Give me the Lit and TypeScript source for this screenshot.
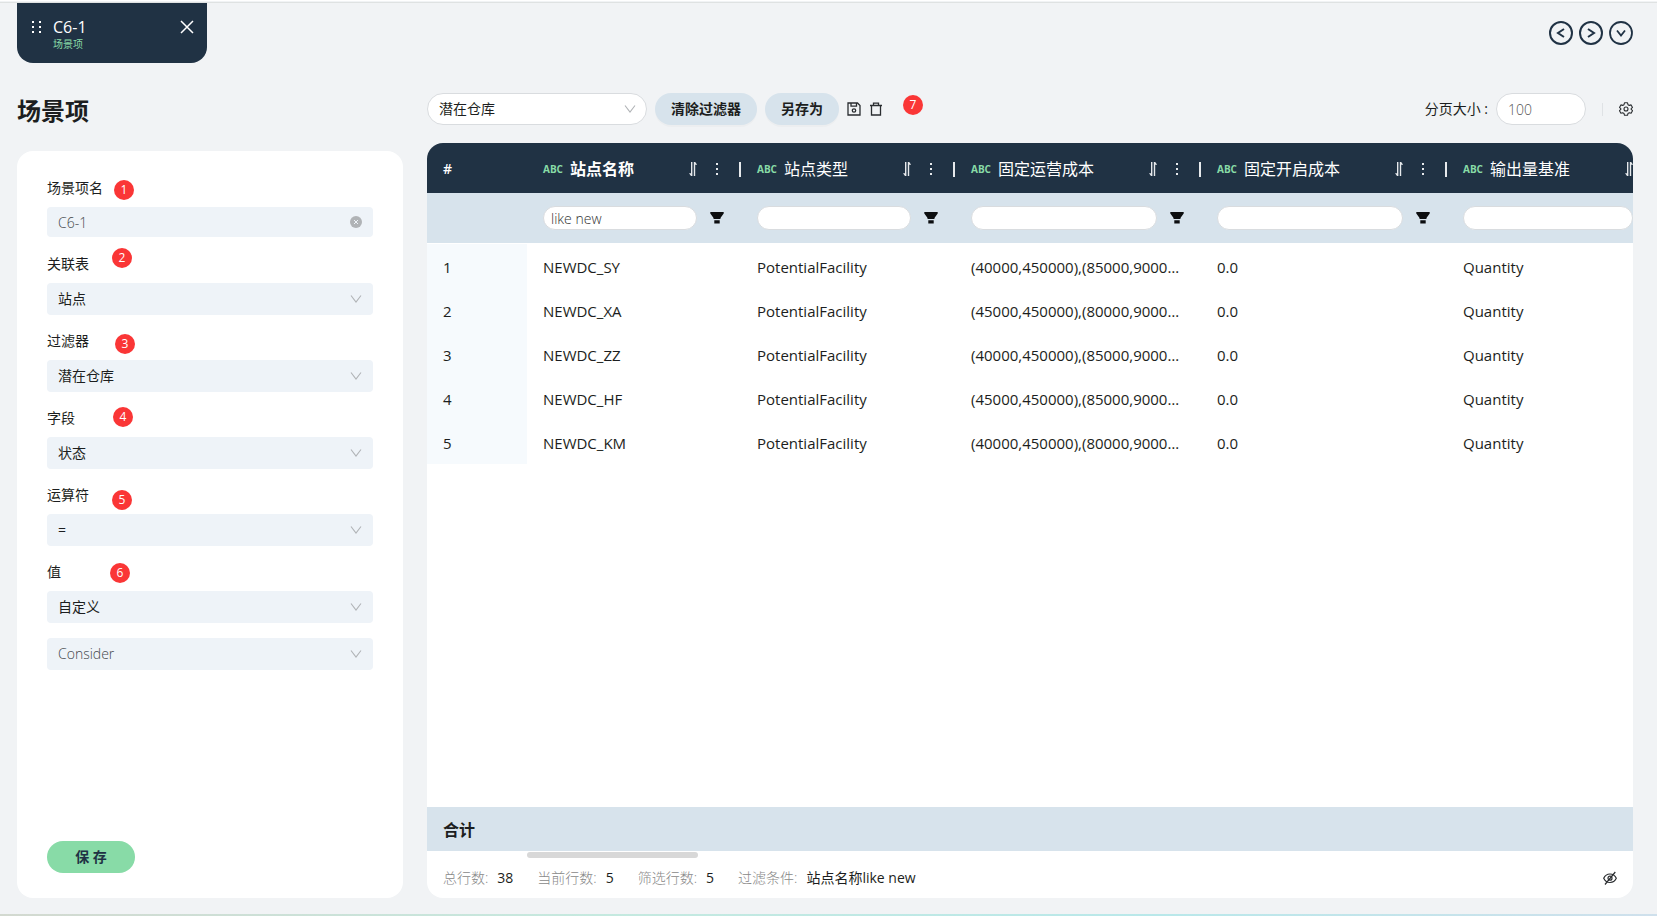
import { LitElement, html, css, svg, nothing } from "lit";
import { customElement, state } from "lit/decorators.js";
import { classMap } from "lit/directives/class-map.js";

interface Column {
  key: string;
  title: string;
  filter: string;
  width: string;
}

interface Field {
  id: string;
  label: string;
  value: string;
}

const COLUMNS: Column[] = [
  { key: "name", title: "站点名称", filter: "like new", width: "col-m" },
  { key: "type", title: "站点类型", filter: "", width: "col-m" },
  { key: "opCost", title: "固定运营成本", filter: "", width: "col-l" },
  { key: "openCost", title: "固定开启成本", filter: "", width: "col-l" },
  { key: "base", title: "输出量基准", filter: "", width: "col-s" },
];

const ROWS: Record<string, string>[] = [
  ["NEWDC_SY", "(40000,450000),(85000,900000)"],
  ["NEWDC_XA", "(45000,450000),(80000,900000)"],
  ["NEWDC_ZZ", "(40000,450000),(85000,900000)"],
  ["NEWDC_HF", "(45000,450000),(85000,900000)"],
  ["NEWDC_KM", "(40000,450000),(80000,900000)"],
].map(([name, opCost]) => ({
  name,
  type: "PotentialFacility",
  opCost,
  openCost: "0.0",
  base: "Quantity",
}));

const FIELDS: Field[] = [
  { id: "table", label: "关联表", value: "站点" },
  { id: "filter", label: "过滤器", value: "潜在仓库" },
  { id: "column", label: "字段", value: "状态" },
  { id: "operator", label: "运算符", value: "=" },
  { id: "value", label: "值", value: "自定义" },
];

const icons = {
  drag: svg`<svg width="10" height="13" viewBox="0 0 10 13" fill="currentColor"><path d="M0 0h2v2H0zM0 5h2v2H0zM0 10h2v2H0zM7 0h2v2H7zM7 5h2v2H7zM7 10h2v2H7z"/></svg>`,
  close: svg`<svg width="14" height="14" viewBox="0 0 14 14" fill="none" stroke="currentColor" stroke-width="1.500"><path d="M1 1l12 12M13 1L1 13"/></svg>`,
  left: svg`<svg width="24" height="24" viewBox="0 0 24 24" fill="none" stroke="currentColor" stroke-width="2"><circle cx="12" cy="12" r="11"/><path d="M15 8l-6 4 6 4"/></svg>`,
  right: svg`<svg width="24" height="24" viewBox="0 0 24 24" fill="none" stroke="currentColor" stroke-width="2"><circle cx="12" cy="12" r="11"/><path d="M9 8l6 4-6 4"/></svg>`,
  down: svg`<svg width="24" height="24" viewBox="0 0 24 24" fill="none" stroke="currentColor" stroke-width="1.800"><circle cx="12" cy="12" r="11"/><path d="M8 9.500l4 5 4-5"/></svg>`,
  chevron: svg`<svg class="chevron" width="12" height="12" viewBox="0 0 12 12" fill="none" stroke="currentColor" stroke-width="1.100"><path d="M1 2.500l5 6.500 5-6.500"/></svg>`,
  clear: svg`<svg width="12" height="12" viewBox="0 0 12 12"><circle cx="6" cy="6" r="6" fill="currentColor"/><path d="M4 4l4 4M8 4l-4 4" stroke="#eef3f8" stroke-width="1"/></svg>`,
  save: svg`<svg width="14" height="14" viewBox="0 0 14 14" fill="none" stroke="currentColor" stroke-width="1.300"><path d="M1 1h9.500L13 3.500V13H1z"/><path d="M4 1v3.200h5.500V1"/><circle cx="7" cy="8.500" r="1.700"/></svg>`,
  trash: svg`<svg width="14" height="14" viewBox="0 0 14 14" fill="none" stroke="currentColor" stroke-width="1.300"><path d="M1 3.500h12M4.500 3.300V1.200h5v2.100M2.500 3.500V13h9V3.500"/></svg>`,
  gear: svg`<svg width="14" height="14" viewBox="0 0 14 14" fill="none" stroke="currentColor" stroke-width="1.100" stroke-linejoin="round"><path d="M5.500.8h3l.5 1.900 1.300.7 1.800-.5 1.400 2.500-1.300 1.300v.7l1.300 1.300-1.400 2.500-1.800-.5-1.300.7-.5 1.900h-3L5 11.400l-1.300-.7-1.800.5L.5 8.700l1.300-1.300v-.7L.5 5.400l1.400-2.500 1.800.5L5 2.700z"/><circle cx="7" cy="7" r="2"/></svg>`,
  sort: svg`<svg width="8" height="14" viewBox="0 0 8 14" fill="currentColor"><path d="M2 0h1.400v14H2L0 11.200h2zM4.800 0h1.400L8.200 2.800h-2V14H4.800z"/></svg>`,
  more: svg`<svg width="2" height="12" viewBox="0 0 2 12" fill="currentColor"><path d="M0 0h2v2H0zM0 5h2v2H0zM0 10h2v2H0z"/></svg>`,
  funnel: svg`<svg width="14" height="12" viewBox="0 0 14 12" fill="currentColor"><path d="M.3 0h13.400v1.500L10.800 5.500 10.300 7H3.700L3.200 5.500.3 1.500zM4.300 8.200h5.400v3.300H4.300z"/></svg>`,
  eyeOff: svg`<svg width="14" height="14" viewBox="0 0 14 14" fill="none" stroke="currentColor" stroke-width="1.200"><path d="M.7 7.300C2 4.500 4.200 3 7 3s5 1.500 6.300 4.300C12 10 9.800 11.500 7 11.500S2 10 .7 7.300zM12.300 1L2 13.500"/><circle cx="7" cy="7.200" r="2"/></svg>`,
};

@customElement("app-root")
export class AppRoot extends LitElement {
  @state() private scenarioName = "C6-1";

  static styles = css`
    :host {
      --navy: #203244;
      --pale: #d7e3ec;
      --field: #eef3f8;
      --green: #88dba7;
      --ink: #1c1e20;
      --cjk: "Noto Sans CJK SC", sans-serif;
      display: flex;
      flex-direction: column;
      position: relative;
      box-sizing: border-box;
      min-height: 100vh;
      padding: 0 24px 18px 17px;
      border-top: 1px solid #fff;
      background: #f1f3f5;
      color: var(--ink);
      font: 14px/22px "Open Sans", var(--cjk);
      overflow: hidden;
    }
    :host::before,
    :host::after {
      content: "";
      position: absolute;
      left: 0;
      right: 0;
    }
    :host::before { top: 1px; height: 1px; background: #dfe2e2; }
    :host::after {
      bottom: 0;
      height: 2px;
      background: linear-gradient(90deg, #d3d9d0, #c5e9df 36%, #b9e8ea 70%, #cfe0ec);
    }
    * { box-sizing: border-box; }
    svg { display: block; flex: none; }
    button, input, select { font: inherit; color: inherit; margin: 0; outline: none; }
    button { padding: 0; border: 0; background: none; cursor: pointer; }

    .topbar {
      display: flex;
      justify-content: space-between;
      align-items: flex-start;
      padding-top: 2px;
    }
    .tab {
      display: flex;
      align-items: flex-start;
      width: 190px;
      height: 60px;
      padding: 14px 13px 0 15px;
      border-radius: 0 0 16px 16px;
      background: var(--navy);
      color: #fff;
    }
    .tab > svg { margin: 4px 11px 0 0; }
    .tab-text { flex: 1; display: flex; flex-direction: column; }
    .tab-name { font-size: 16px; line-height: 20px; }
    .tab-kind { color: var(--green); font-size: 10px; line-height: 14px; }
    .tab button { margin-top: 3px; }
    .nav { display: flex; gap: 6px; padding-top: 18px; color: var(--navy); }

    .main { flex: 1; display: flex; gap: 24px; }
    .side { flex: 0 0 386px; display: flex; flex-direction: column; }
    .side h1 {
      margin: 0;
      padding: 29px 0 23px;
      font: 700 24px/36px var(--cjk);
    }
    .card {
      flex: 1;
      display: flex;
      flex-direction: column;
      padding: 26px 30px 25px;
      border-radius: 16px;
      background: #fff;
    }
    .field { display: flex; flex-direction: column; margin-bottom: 15px; }
    .field.first { margin-bottom: 16px; }
    .field label { line-height: 22px; margin-bottom: 8px; }
    .box { position: relative; display: flex; align-items: center; }
    .box input, .box select {
      appearance: none;
      width: 100%;
      height: 32px;
      padding: 0 32px 0 11px;
      border: 0;
      border-radius: 4px;
      background: var(--field);
    }
    .box input { height: 30px; color: #44484c; font-weight: 300; }
    .box select.light { color: #44484c; font-weight: 300; }
    .box > svg, .box > button {
      position: absolute;
      right: 11px;
      color: #b0b3b6;
      pointer-events: none;
    }
    .save {
      align-self: flex-start;
      margin-top: auto;
      width: 88px;
      height: 32px;
      border-radius: 16px;
      background: var(--green);
      color: var(--navy);
      font-weight: 600;
    }

    .content { flex: 1; min-width: 0; display: flex; flex-direction: column; }
    .toolbar {
      display: flex;
      align-items: center;
      gap: 8px;
      padding: 30px 0 18px;
    }
    .view { width: 220px; }
    .view select, .size input {
      border: 1px solid #d9dcdf;
      border-radius: 16px;
      background: #fff;
    }
    .pill {
      height: 32px;
      padding: 0 16px;
      border-radius: 16px;
      background: var(--pale);
      box-shadow: 0 2px 0 rgba(0, 0, 0, 0.02);
      font-weight: 600;
    }
    .icon { color: #2a2d30; }
    .size { display: flex; align-items: center; gap: 8px; margin-left: auto; }
    .size input {
      width: 90px;
      height: 32px;
      padding: 0 11px;
      color: #555;
      font-weight: 300;
    }
    .rule { width: 1px; height: 13px; margin: 0 8px; background: #dfe2e5; }

    .panel {
      flex: 1;
      display: flex;
      flex-direction: column;
      border-radius: 16px;
      background: #fff;
      overflow: hidden;
    }
    .scroll { flex: 1; overflow: hidden; }
    table { width: 1250px; table-layout: fixed; border-collapse: separate; border-spacing: 0; text-align: left; }
    .col-i { width: 100px; }
    .col-m { width: 214px; }
    .col-l { width: 246px; }
    .col-s { width: 230px; }
    th, td { padding: 0 16px; font-weight: 400; }
    thead tr { height: 50px; }
    .heads { background: var(--navy); color: #fff; }
    .heads th { padding: 2px 0 0 16px; }
    .hash { font-weight: 600; }
    .head { display: flex; align-items: center; font-size: 16px; line-height: 24px; }
    .abc { width: 27px; color: var(--green); font-size: 10px; font-weight: 700; }
    .title { flex: 1; }
    .sorted .title { font-weight: 700; }
    .head svg { color: #e6e9ec; }
    .head .kebab { width: 2px; margin-left: 19px; }
    .bar { width: 2px; height: 15px; margin: 0 0 0 21px; background: #e6e9ec; }
    .filters { background: var(--pale); }
    .filters td { padding-right: 17px; }
    .filter { display: flex; align-items: center; gap: 13px; }
    .filter input {
      flex: 1;
      min-width: 0;
      height: 24px;
      padding: 0 7px;
      border: 1px solid #d9dcdf;
      border-radius: 12px;
      background: #fff;
      color: #333;
      font-weight: 300;
    }
    .filter button { color: #0c0e10; }
    tbody td {
      height: 44px;
      padding-top: 2px;
      overflow: hidden;
      text-overflow: ellipsis;
      white-space: nowrap;
      font-size: 15px;
    }
    tbody tr:first-child td { height: 45px; border-top: 1px solid #fff; }
    tbody .index { background: #f6fafd; }
    .total {
      height: 44px;
      padding: 0 16px;
      background: var(--pale);
      font: 600 16px/44px var(--cjk);
    }
    .thumb { width: 171px; height: 6px; margin: 1px 0 0 100px; border-radius: 3px; background: #d8d8d8; }
    .status {
      display: flex;
      align-items: center;
      gap: 24px;
      height: 40px;
      padding: 0 16px;
    }
    .status dl { display: flex; gap: 24px; margin: 0; flex: 1; }
    .status dl div { display: flex; gap: 9px; }
    .status dt { color: #888; font-weight: 300; }
    .status dd { margin: 0; }

    .badge {
      position: absolute;
      width: 20px;
      height: 20px;
      border-radius: 10px;
      background: #fa3636;
      color: #fff;
      font-size: 12px;
      line-height: 20px;
      text-align: center;
    }
    .b1 { left: 114px; top: 179px; }
    .b2 { left: 112px; top: 247px; }
    .b3 { left: 115px; top: 333px; }
    .b4 { left: 113px; top: 406px; }
    .b5 { left: 112px; top: 489px; }
    .b6 { left: 110px; top: 562px; }
    .b7 { left: 903px; top: 94px; }
  `;

  private renderHead(c: Column, i: number) {
    return html`<th scope="col" class=${classMap({ sorted: i === 0 })}>
      <div class="head">
        <span class="abc">ABC</span><span class="title">${c.title}</span>
        <button aria-label="排序">${icons.sort}</button>
        <button class="kebab" aria-label="更多">${icons.more}</button>
        <span class="bar"></span>
      </div>
    </th>`;
  }

  render() {
    return html`
      <header class="topbar">
        <div class="tab">
          ${icons.drag}
          <div class="tab-text">
            <span class="tab-name">${this.scenarioName}</span>
            <span class="tab-kind">场景项</span>
          </div>
          <button aria-label="关闭">${icons.close}</button>
        </div>
        <nav class="nav">
          <button aria-label="上一个">${icons.left}</button>
          <button aria-label="下一个">${icons.right}</button>
          <button aria-label="展开">${icons.down}</button>
        </nav>
      </header>
      <main class="main">
        <section class="side">
          <h1>场景项</h1>
          <form class="card" @submit=${(e: Event) => e.preventDefault()}>
            <div class="field first">
              <label for="name">场景项名</label>
              <div class="box">
                <input id="name" .value=${this.scenarioName}
                  @change=${(e: Event) => (this.scenarioName = (e.target as HTMLInputElement).value)} />
                <button type="button" aria-label="清空">${icons.clear}</button>
              </div>
            </div>
            ${FIELDS.map((f) => html`<div class="field">
              <label for=${f.id}>${f.label}</label>
              <div class="box">
                <select id=${f.id}><option>${f.value}</option></select>${icons.chevron}
              </div>
            </div>`)}
            <div class="box">
              <select class="light" aria-label="自定义值"><option>Consider</option></select>${icons.chevron}
            </div>
            <button class="save">保 存</button>
          </form>
        </section>
        <section class="content">
          <div class="toolbar">
            <div class="box view">
              <select aria-label="过滤器"><option>潜在仓库</option></select>${icons.chevron}
            </div>
            <button class="pill">清除过滤器</button>
            <button class="pill">另存为</button>
            <button class="icon" aria-label="保存">${icons.save}</button>
            <button class="icon" aria-label="删除">${icons.trash}</button>
            <div class="size">
              <label for="size">分页大小 :</label>
              <input id="size" value="100" />
            </div>
            <span class="rule"></span>
            <button class="icon" aria-label="设置">${icons.gear}</button>
          </div>
          <div class="panel">
            <div class="scroll">
              <table>
                <colgroup>
                  <col class="col-i" />
                  ${COLUMNS.map((c) => html`<col class=${c.width} />`)}
                </colgroup>
                <thead>
                  <tr class="heads">
                    <th scope="col" class="hash">#</th>
                    ${COLUMNS.map((c, i) => this.renderHead(c, i))}
                  </tr>
                  <tr class="filters">
                    <td></td>
                    ${COLUMNS.map((c) => html`<td>
                      <div class="filter">
                        <input aria-label=${c.title} .value=${c.filter} />
                        <button aria-label="过滤">${icons.funnel}</button>
                      </div>
                    </td>`)}
                  </tr>
                </thead>
                <tbody>
                  ${ROWS.map((r, i) => html`<tr>
                    <td class="index">${i + 1}</td>
                    ${COLUMNS.map((c) => html`<td>${r[c.key] ?? nothing}</td>`)}
                  </tr>`)}
                </tbody>
              </table>
            </div>
            <div class="total">合计</div>
            <div class="thumb"></div>
            <footer class="status">
              <dl>
                <div><dt>总行数:</dt><dd>38</dd></div>
                <div><dt>当前行数:</dt><dd>5</dd></div>
                <div><dt>筛选行数:</dt><dd>5</dd></div>
                <div><dt>过滤条件:</dt><dd>站点名称like new</dd></div>
              </dl>
              <button class="icon" aria-label="隐藏">${icons.eyeOff}</button>
            </footer>
          </div>
        </section>
      </main>
      ${[1, 2, 3, 4, 5, 6, 7].map((n) => html`<span class="badge b${n}">${n}</span>`)}
    `;
  }
}
